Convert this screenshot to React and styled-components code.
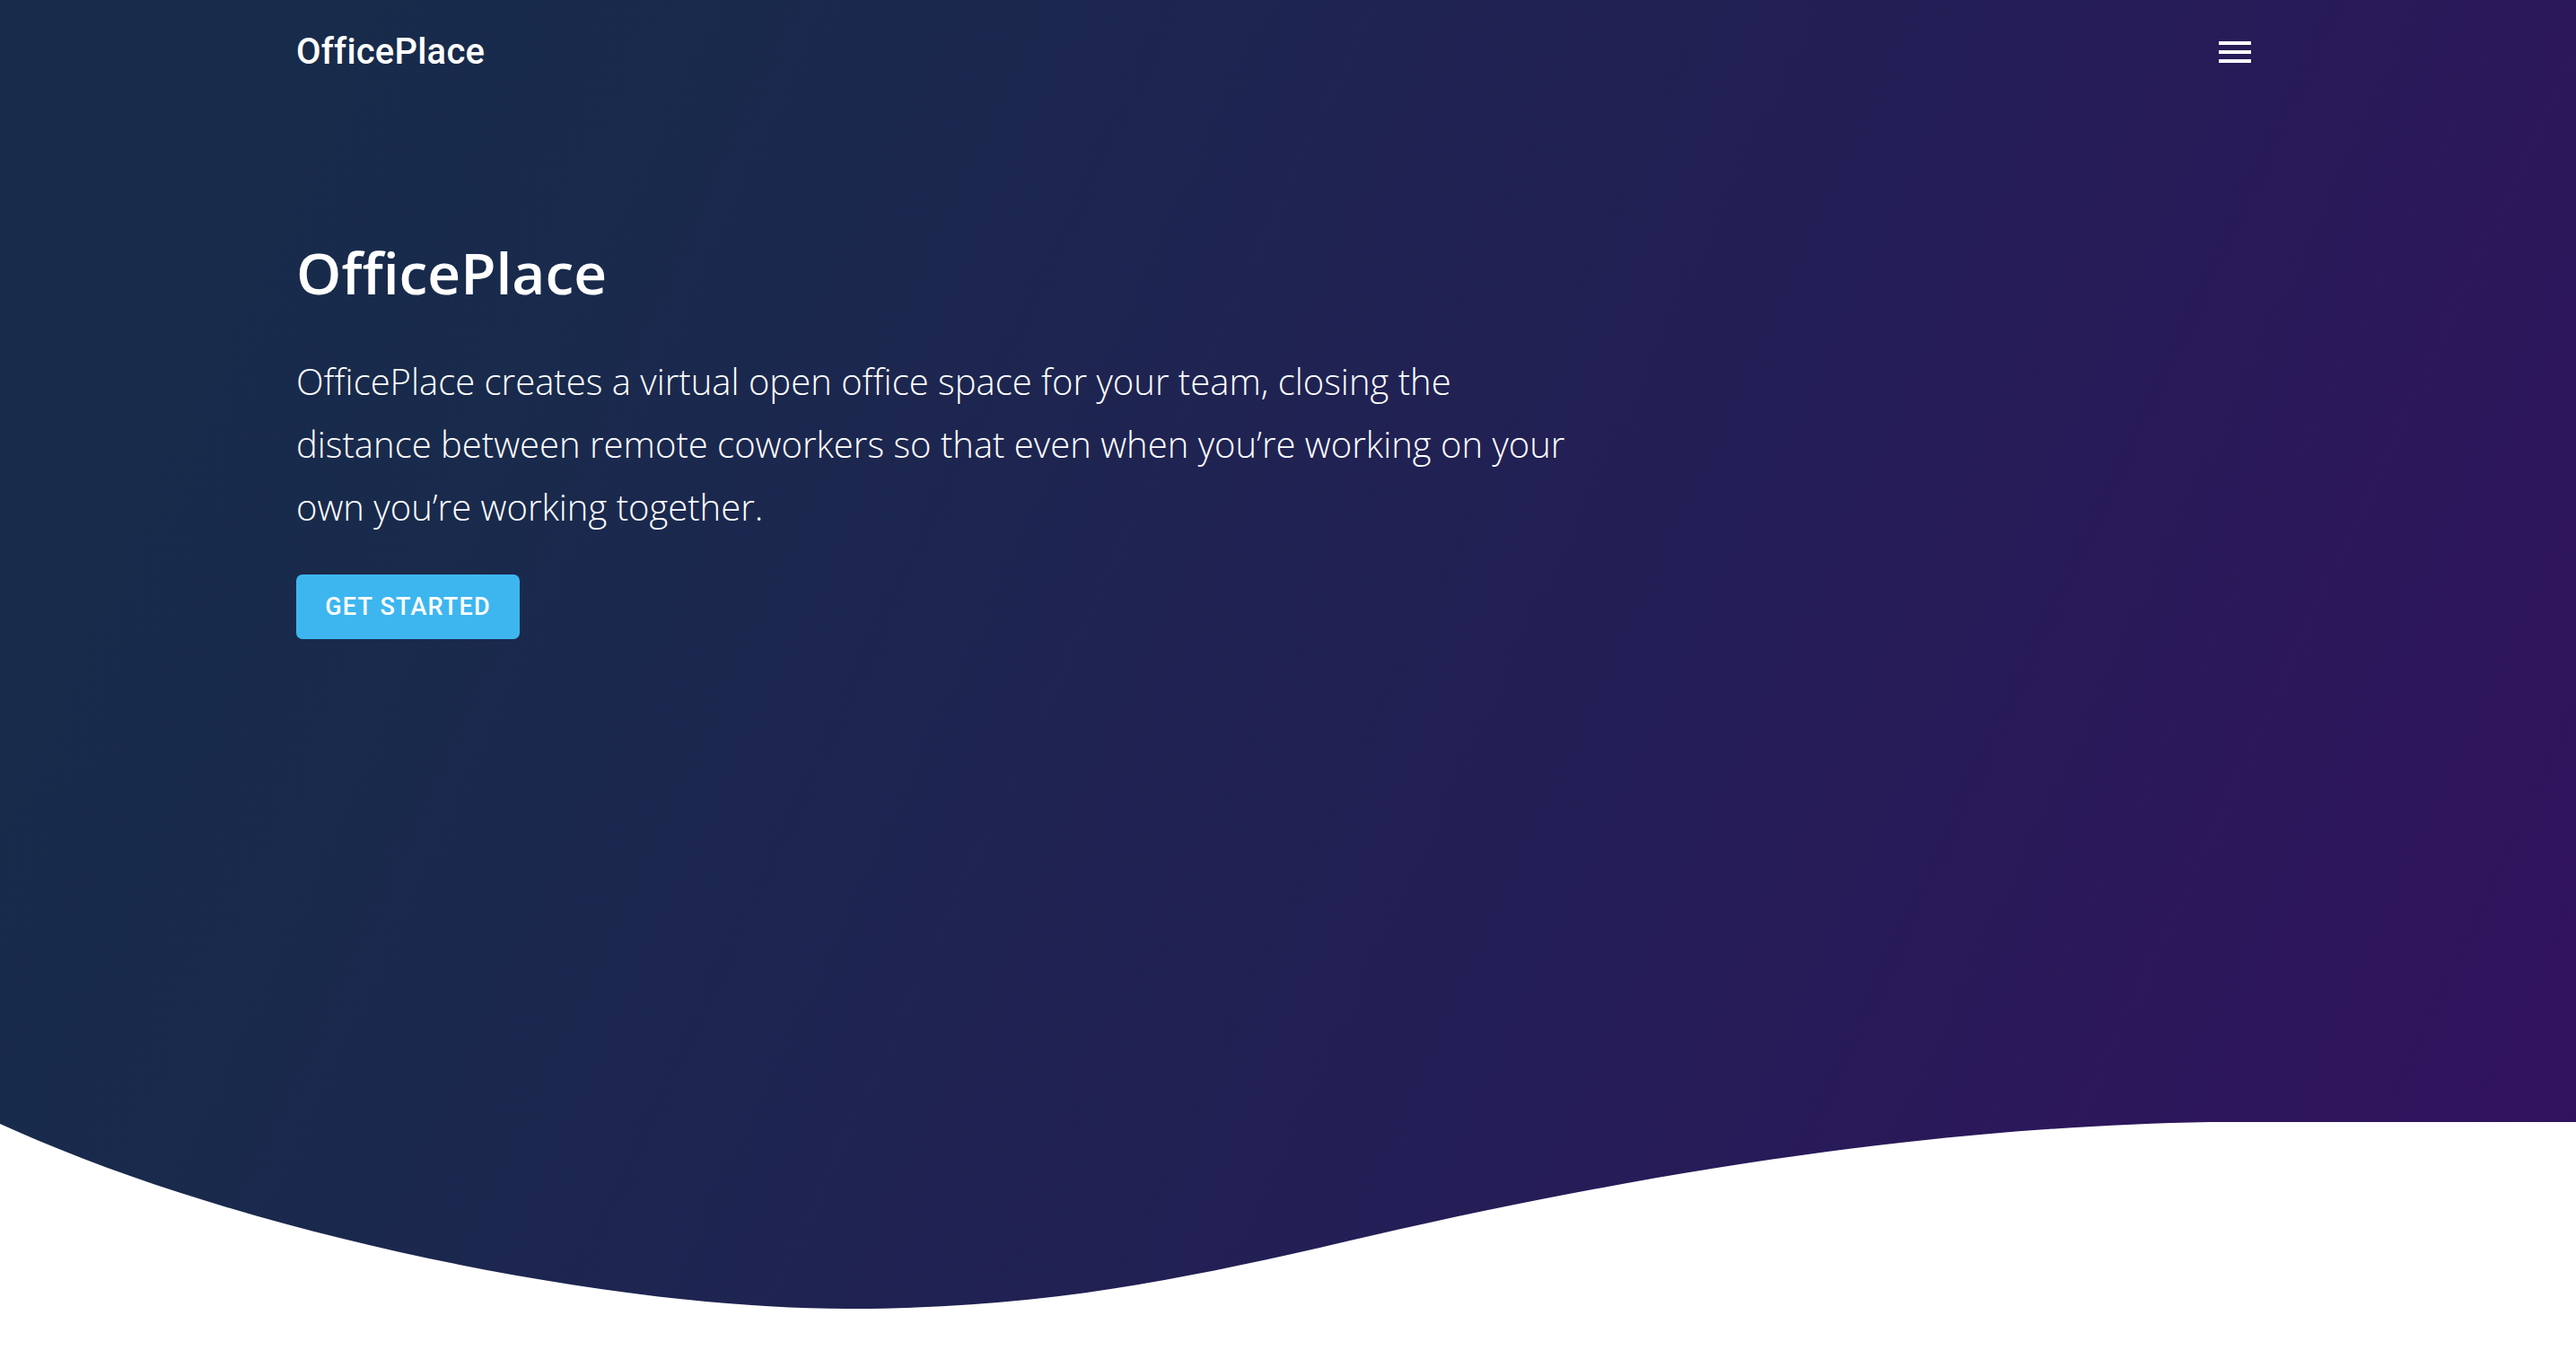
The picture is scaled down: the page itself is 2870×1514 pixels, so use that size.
import React from "react";
import styled, { createGlobalStyle } from "styled-components";

const Global = createGlobalStyle`
  html, body { margin: 0; padding: 0; background: #ffffff; }
  body { font-family: "Open Sans", "Liberation Sans", sans-serif; }
  * { box-sizing: border-box; }
`;

const Hero = styled.section`
  position: relative;
  height: 1514px;
  background: linear-gradient(115deg, #172c4a 0%, #192a4c 22%, #241e56 62%, #33115f 100%);
  color: #ffffff;
  overflow: hidden;
`;

const Container = styled.div`
  margin-left: 330px;
  width: 2184px;
`;

const Nav = styled.nav`
  height: 114px;
  display: flex;
  align-items: center;
  justify-content: space-between;
`;

const Logo = styled.div`
  font-family: Roboto, "Liberation Sans", sans-serif;
  font-weight: 500;
  font-size: 40px;
  letter-spacing: 0.2px;
  color: #ffffff;
`;

const MenuButton = styled.button`
  width: 48px;
  height: 48px;
  padding: 0;
  border: 0;
  background: transparent;
  display: flex;
  flex-direction: column;
  align-items: center;
  justify-content: center;
  gap: 6px;
  margin-top: 2px;
  cursor: pointer;
`;

const Bar = styled.span`
  display: block;
  width: 36px;
  height: 4px;
  background: #ffffff;
`;

const Content = styled.div`
  padding-top: 151px;
`;

const Title = styled.h1`
  margin: 0;
  font-family: "Open Sans", "Liberation Sans", sans-serif;
  font-weight: 600;
  font-size: 64px;
  line-height: 77px;
  color: #ffffff;
`;

const Lead = styled.p`
  margin: 48px 0 0;
  max-width: 1425px;
  font-family: "Open Sans", "Liberation Sans", sans-serif;
  font-weight: 300;
  font-size: 40px;
  line-height: 70px;
  color: #ffffff;
`;

const Cta = styled.button`
  margin-top: 40px;
  height: 72px;
  width: 249px;
  border: 0;
  border-radius: 7px;
  background: #3db6f0;
  color: #ffffff;
  font-family: Roboto, "Liberation Sans", sans-serif;
  font-weight: 500;
  font-size: 27px;
  letter-spacing: 1.2px;
  text-transform: uppercase;
  cursor: pointer;
`;

const Wave = styled.svg`
  position: absolute;
  left: 0;
  bottom: 0;
  width: 100%;
  height: 264px;
  display: block;
`;

export default function App() {
  return (
    <>
      <Global />
      <Hero>
        <Container>
          <Nav>
            <Logo>OfficePlace</Logo>
            <MenuButton aria-label="menu">
              <Bar />
              <Bar />
              <Bar />
            </MenuButton>
          </Nav>
          <Content>
            <Title>OfficePlace</Title>
            <Lead>
              OfficePlace creates a virtual open office space for your team, closing the distance between remote
              coworkers so that even when you’re working on your own you’re working together.
            </Lead>
            <Cta>Get Started</Cta>
          </Content>
        </Container>
        <Wave viewBox="0 0 2870 264" preserveAspectRatio="none">
          <path
            d="M0,2 C280,130 700,210 952,208 C1150,207 1300,180 1500,133 C1900,40 2200,5 2462,0 L2870,0 L2870,264 L0,264 Z"
            fill="#ffffff"
          />
        </Wave>
      </Hero>
    </>
  );
}
